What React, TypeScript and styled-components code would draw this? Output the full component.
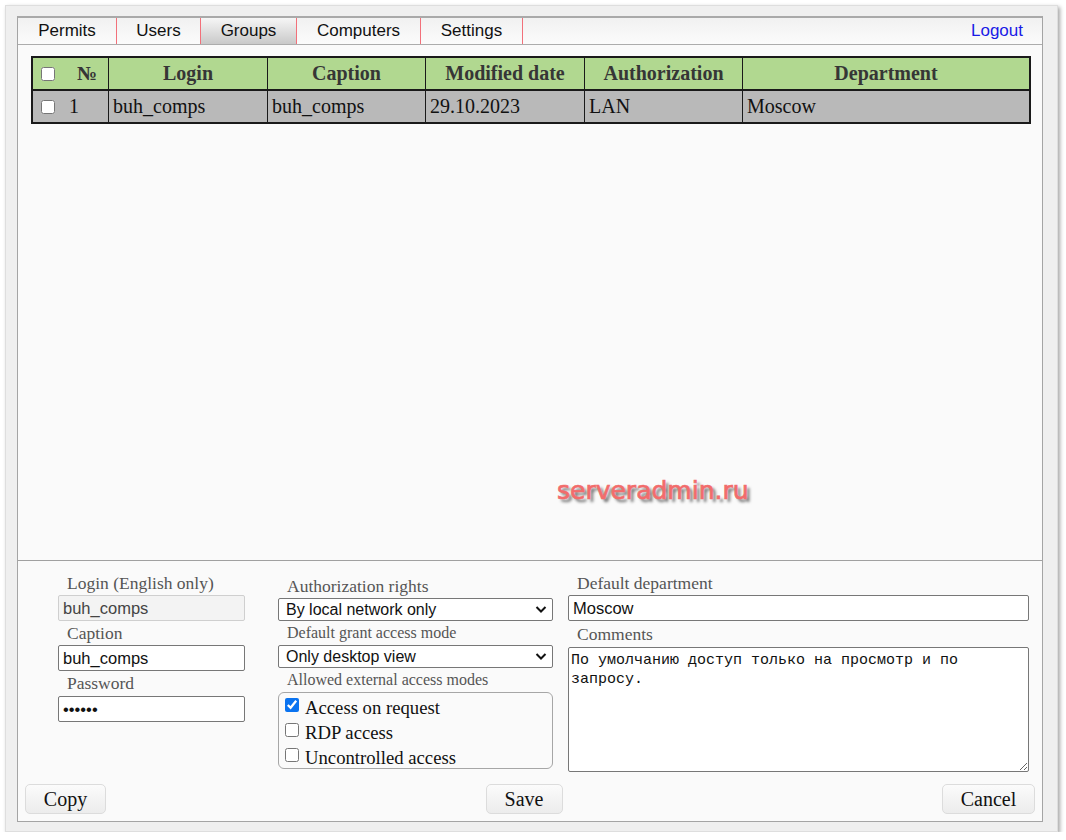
import React from 'react'
import styled, { createGlobalStyle } from 'styled-components'

const GlobalStyle = createGlobalStyle`
	body {
		margin: 0;
		background: #ffffff;
	}
`

const serif = `'Liberation Serif', 'Times New Roman', serif`
const sans = `'Liberation Sans', Arial, sans-serif`

const Frame = styled.div`
	box-sizing: border-box;
	margin: 5px 0 0 5px;
	width: 1053px;
	height: 827px;
	padding: 10px 14px 11px 11px;
	background: #efefef;
	border: 1px solid #dedede;
	box-shadow: 2px 2px 4px rgba(0, 0, 0, 0.35);
`

const Page = styled.div`
	position: relative;
	box-sizing: border-box;
	height: 806px;
	display: flex;
	flex-direction: column;
	background: #fafafa;
	border: 1px solid #a4a4a4;
	border-top: 2px solid #a9a9a9;
`

const NavBar = styled.div`
	display: flex;
	align-items: stretch;
	height: 26px;
	border-bottom: 1px solid #acacac;
	background: linear-gradient(#f1f1f1, #fbfbfb);
	font-family: ${sans};
	font-size: 17px;
`

const Tab = styled.div<{ $w: number; $active?: boolean }>`
	box-sizing: border-box;
	width: ${(p) => p.$w}px;
	display: flex;
	align-items: center;
	justify-content: center;
	border-right: 1px solid #f2707a;
	color: #111;
	background: ${(p) => (p.$active ? 'linear-gradient(#f6f6f6, #c9c9c9)' : 'transparent')};
`

const Logout = styled.a`
	margin-left: auto;
	display: flex;
	align-items: center;
	padding-right: 19px;
	color: #1a1ae6;
	text-decoration: none;
`

const ListArea = styled.div`
	flex: 1;
	padding: 11px 12px 0 13px;
	border-bottom: 1px solid #a0a0a0;
`

const Table = styled.table`
	width: 1000px;
	border-collapse: collapse;
	border: 2px solid #1a1a1a;
	font-family: ${serif};
	font-size: 20px;
	table-layout: fixed;
`

const HeadCell = styled.th<{ $w?: number }>`
	width: ${(p) => (p.$w ? `${p.$w}px` : 'auto')};
	height: 31px;
	padding: 0;
	border: 1px solid #1a1a1a;
	border-bottom: 2px solid #1a1a1a;
	background: #b1d890;
	color: #363636;
	font-weight: bold;
	text-align: center;
`

const Cell = styled.td`
	height: 31px;
	padding: 0 0 0 4px;
	border: 1px solid #1a1a1a;
	background: #b9b9b9;
	color: #111;
	white-space: nowrap;
`

const Check = styled.input.attrs({ type: 'checkbox' })`
	width: 14px;
	height: 14px;
	margin: 0;
	vertical-align: middle;
	accent-color: #0a73f0;
`

const FirstHead = styled.div`
	display: flex;
	align-items: center;
	padding-left: 8px;
	gap: 22px;
`

const FirstCell = styled.div`
	display: flex;
	align-items: center;
	padding-left: 4px;
	gap: 14px;
`

const Watermark = styled.div`
	position: absolute;
	left: 539px;
	top: 458px;
	font-family: 'DejaVu Sans', Verdana, sans-serif;
	font-size: 25px;
	color: #f26c6c;
	-webkit-text-stroke: 0.7px #f26c6c;
	text-shadow: 3px 3px 3px #6a6a6a;
`

const EditArea = styled.div`
	height: 260px;
	box-sizing: border-box;
	padding: 10px 7px 7px;
	display: flex;
	flex-direction: column;
`

const FormRow = styled.div`
	display: flex;
	padding-left: 33px;
`

const Column = styled.div<{ $w: number; $gap?: number; $top?: number }>`
	display: flex;
	flex-direction: column;
	width: ${(p) => p.$w}px;
	margin-left: ${(p) => p.$gap ?? 0}px;
	padding-top: ${(p) => p.$top ?? 0}px;
`

const Label = styled.div<{ $small?: boolean; $h?: number }>`
	height: ${(p) => p.$h ?? 24}px;
	line-height: ${(p) => p.$h ?? 24}px;
	padding-left: 9px;
	font-family: ${serif};
	font-size: ${(p) => (p.$small ? 16 : 17.5)}px;
	color: #555;
	white-space: nowrap;
`

const TextField = styled.input`
	box-sizing: border-box;
	height: 26px;
	width: 100%;
	margin: 0;
	padding: 0 4px;
	font-family: ${sans};
	font-size: 16.5px;
	color: #111;
	background: #fff;
	border: 1px solid #777;
	border-radius: 2px;
	outline: none;

	&:disabled {
		background: #f3f3f3;
		border-color: #cfcfcf;
		color: #444;
	}
`

const SelectWrap = styled.div`
	position: relative;
	height: 23px;
`

const Select = styled.select`
	box-sizing: border-box;
	appearance: none;
	width: 100%;
	height: 23px;
	margin: 0;
	padding: 0 0 0 7px;
	font-family: ${sans};
	font-size: 16px;
	color: #111;
	background: #fff;
	border: 1px solid #777;
	border-radius: 2px;
`

const Chevron = styled.svg`
	position: absolute;
	right: 6px;
	top: 7px;
	pointer-events: none;
`

const ModesBox = styled.div`
	box-sizing: border-box;
	height: 77px;
	padding: 2px 6px;
	border: 1px solid #a6a6a6;
	border-radius: 6px;
`

const ModeRow = styled.label`
	display: flex;
	align-items: center;
	gap: 6px;
	height: 25px;
	font-family: ${serif};
	font-size: 18.7px;
	color: #111;

	input {
		position: relative;
		top: -3px;
	}
`

const Comments = styled.textarea`
	box-sizing: border-box;
	width: 100%;
	height: 125px;
	margin: 0;
	padding: 3px 2px;
	font-family: 'Liberation Mono', 'Courier New', monospace;
	font-size: 15px;
	line-height: 19px;
	color: #111;
	background: #fff;
	border: 1px solid #777;
	border-radius: 2px;
	resize: vertical;
	outline: none;
`

const ButtonRow = styled.div`
	margin-top: auto;
	display: flex;
	justify-content: space-between;
`

const Button = styled.button<{ $w: number }>`
	width: ${(p) => p.$w}px;
	height: 30px;
	padding: 0;
	font-family: ${serif};
	font-size: 20px;
	color: #111;
	background: linear-gradient(#fbfbfb, #ececec);
	border: 1px solid #dcdcdc;
	border-radius: 5px;
`

const ChevronIcon = () => (
	<Chevron width="12" height="9" viewBox="0 0 12 9">
		<path d="M1.5 2 L6 6.5 L10.5 2" fill="none" stroke="#111" strokeWidth="2" />
	</Chevron>
)

const tabs = [
	{ title: 'Permits', w: 99 },
	{ title: 'Users', w: 84 },
	{ title: 'Groups', w: 96, active: true },
	{ title: 'Computers', w: 124 },
	{ title: 'Settings', w: 102 },
]

const columns = [
	{ key: 'login', title: 'Login', w: 158 },
	{ key: 'caption', title: 'Caption', w: 157 },
	{ key: 'date', title: 'Modified date', w: 158 },
	{ key: 'auth', title: 'Authorization', w: 157 },
	{ key: 'dep', title: 'Department' },
]

const rows = [{ n: 1, login: 'buh_comps', caption: 'buh_comps', date: '29.10.2023', auth: 'LAN', dep: 'Moscow' }]

export default function App() {
	return (
		<>
			<GlobalStyle />
			<Frame>
				<Page>
					<NavBar>
						{tabs.map((t) => (
							<Tab key={t.title} $w={t.w} $active={t.active}>
								{t.title}
							</Tab>
						))}
						<Logout href="#">Logout</Logout>
					</NavBar>

					<ListArea>
						<Table>
							<thead>
								<tr>
									<HeadCell $w={75}>
										<FirstHead>
											<Check />
											<span>№</span>
										</FirstHead>
									</HeadCell>
									{columns.map((c) => (
										<HeadCell key={c.key} $w={c.w}>
											{c.title}
										</HeadCell>
									))}
								</tr>
							</thead>
							<tbody>
								{rows.map((r) => (
									<tr key={r.n}>
										<Cell>
											<FirstCell>
												<Check />
												<span>{r.n}</span>
											</FirstCell>
										</Cell>
										<Cell>{r.login}</Cell>
										<Cell>{r.caption}</Cell>
										<Cell>{r.date}</Cell>
										<Cell>{r.auth}</Cell>
										<Cell>{r.dep}</Cell>
									</tr>
								))}
							</tbody>
						</Table>
					</ListArea>

					<Watermark>serveradmin.ru</Watermark>

					<EditArea>
						<FormRow>
							<Column $w={187}>
								<Label>Login (English only)</Label>
								<TextField disabled defaultValue="buh_comps" />
								<Label>Caption</Label>
								<TextField defaultValue="buh_comps" />
								<Label $h={25}>Password</Label>
								<TextField type="password" defaultValue="123456" />
							</Column>

							<Column $w={275} $gap={33} $top={4}>
								<Label $h={23}>Authorization rights</Label>
								<SelectWrap>
									<Select defaultValue="lan">
										<option value="lan">By local network only</option>
									</Select>
									<ChevronIcon />
								</SelectWrap>
								<Label $small>Default grant access mode</Label>
								<SelectWrap>
									<Select defaultValue="view">
										<option value="view">Only desktop view</option>
									</Select>
									<ChevronIcon />
								</SelectWrap>
								<Label $small>Allowed external access modes</Label>
								<ModesBox>
									<ModeRow>
										<Check defaultChecked />
										Access on request
									</ModeRow>
									<ModeRow>
										<Check />
										RDP access
									</ModeRow>
									<ModeRow>
										<Check />
										Uncontrolled access
									</ModeRow>
								</ModesBox>
							</Column>

							<Column $w={461} $gap={15}>
								<Label>Default department</Label>
								<TextField defaultValue="Moscow" />
								<Label $h={26}>Comments</Label>
								<Comments defaultValue="По умолчанию доступ только на просмотр и по запросу." />
							</Column>
						</FormRow>

						<ButtonRow>
							<Button $w={81}>Copy</Button>
							<Button $w={77}>Save</Button>
							<Button $w={93}>Cancel</Button>
						</ButtonRow>
					</EditArea>
				</Page>
			</Frame>
		</>
	)
}
